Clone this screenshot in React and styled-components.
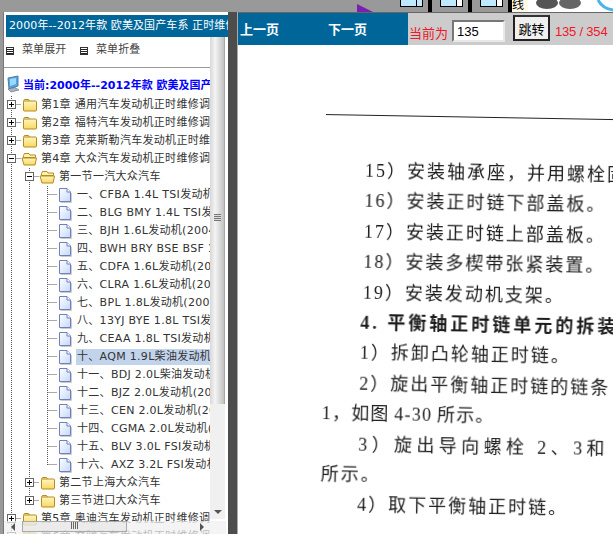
import styled, { createGlobalStyle } from "styled-components";

const GlobalStyle = createGlobalStyle`
  html, body {
    margin: 0;
    padding: 0;
    background: #999;
    overflow: hidden;
  }
  * { box-sizing: border-box; }
`;

const Shell = styled.div`
  width: 613px;
  height: 534px;
  display: flex;
  flex-direction: column;
  overflow: hidden;
  font-family: "DejaVu Sans", "Noto Sans CJK SC", sans-serif;
  font-size: 11px;
`;

/* strip of the page behind the frames */
const TopStrip = styled.div`
  height: 12px;
  flex: none;
  display: flex;
  background: #999;
  padding-left: 357px;
`;

const Triangle = styled.div`
  width: 16px;
  height: 8px;
  margin-top: 4px;
  margin-right: 23px;
  background: #7a1fb0;
  clip-path: polygon(0 0, 100% 100%, 0 100%);
`;

const Thumb = styled.div`
  width: 36px;
  height: 12px;
  padding: 0 5px 0 4px;
  background: #999;
  border-right: 4px solid #000;
  margin-right: 4px;
`;

const ThumbInner = styled.div`
  height: 7px;
  background: linear-gradient(90deg, #bfe8ff 0 72%, #000 72% 76%, ${(p) => (p.$pale ? "#fff" : "#bfe8ff")} 76%);
  border: 1px solid #000;
  border-top: 0;
`;

const StripLabel = styled.div`
  width: 16px;
  height: 12px;
  margin-left: -4px;
  background: #fffbe6;
  color: #000;
  font-size: 12px;
  line-height: 10px;
  overflow: hidden;
`;

const StripArt = styled.div`
  flex: 1;
  background: #fff;
`;

const Frames = styled.div`
  flex: 1;
  min-height: 0;
  display: flex;
`;

const LeftPanel = styled.div`
  width: 225px;
  margin-left: 3px;
  flex: none;
  display: flex;
  flex-direction: column;
  background: #fff;
  border-left: 1px solid #777;
  padding-top: 3px;
`;

const TitleBar = styled.div`
  height: 22px;
  flex: none;
  margin-left: 2px;
  padding-left: 3px;
  background: #00669a;
  color: #fff;
  line-height: 21px;
  letter-spacing: 0.1px;
  white-space: nowrap;
  overflow: hidden;
`;

const PanelBody = styled.div`
  flex: 1;
  min-height: 0;
  display: flex;
  position: relative;
`;

const TreeArea = styled.div`
  width: 206px;
  flex: none;
  overflow: hidden;
`;

const MenuBar = styled.div`
  height: 31px;
  display: flex;
  align-items: flex-start;
  padding: 5px 0 0 3px;
  color: #444;
  border-bottom: 1px solid #999;
  margin-left: -1px;
`;

const MenuItem = styled.div`
  width: 74px;
  display: flex;
  align-items: center;
  gap: 8px;
  line-height: 16px;
  letter-spacing: 0.1px;
`;

const MenuBox = styled.span`
  width: 8px;
  height: 8px;
  flex: none;
  margin-top: 2px;
  border: 1px solid #333;
  background: repeating-linear-gradient(#fff 0 1px, #222 1px 2px);
`;

const RootRow = styled.div`
  height: 18px;
  margin: 7px 0 3px;
  padding-left: 3px;
  display: flex;
  align-items: center;
  color: #00f;
  font-weight: bold;
  white-space: nowrap;
`;

const Row = styled.div`
  height: 18px;
  display: flex;
  align-items: center;
  white-space: nowrap;
  color: #333;
  margin-left: -1px;
`;

const Label = styled.span`
  margin-left: ${(p) => (p.$selected ? "1px" : "2px")};
  padding: 0 ${(p) => (p.$selected ? "1px" : "0")};
  height: 16px;
  line-height: 16px;
  flex: 1;
  letter-spacing: 0.3px;
  background: ${(p) => (p.$selected ? "#c2d4ec" : "transparent")};
`;

const VScroll = styled.div`
  width: 15px;
  height: 482px;
  flex: none;
  position: relative;
  background: #f0f0f0;
`;

const VThumb = styled.div`
  height: 367px;
  background: linear-gradient(90deg, #d8d8d8, #f4f4f4 35%, #c4c4c4 90%, #999);
  display: flex;
  align-items: center;
  justify-content: center;
  padding-bottom: 6px;
`;

const Grip = styled.span`
  width: 7px;
  height: 7px;
  background: repeating-linear-gradient(#777 0 1px, #ddd 1px 2px);
`;

const DownArrow = styled.span`
  position: absolute;
  left: 4px;
  bottom: 5px;
  border: 4px solid transparent;
  border-top: 4px solid #555;
  border-bottom: 0;
`;

const HScroll = styled.div`
  position: absolute;
  left: 0;
  right: 2px;
  bottom: 0;
  height: 13px;
  background: rgba(240, 240, 240, 0.72);
`;

const HThumb = styled.div`
  position: absolute;
  left: 18px;
  top: 0;
  width: 105px;
  height: 11px;
  border: 1px solid #aaa;
  background: rgba(225, 225, 225, 0.45);
  display: flex;
  justify-content: center;
`;

const HGrip = styled.span`
  width: 7px;
  height: 7px;
  background: repeating-linear-gradient(90deg, #666 0 1px, transparent 1px 2px);
`;

const HArrow = styled.span`
  position: absolute;
  top: 2px;
  left: ${(p) => p.$left}px;
  border: 4px solid transparent;
  ${(p) => (p.$right ? "border-left: 4px solid #555; border-right: 0;" : "border-right: 4px solid #555; border-left: 0;")}
`;

const Divider = styled.div`
  width: 10px;
  flex: none;
  background: #4d4d4d;
  border-right: 1px solid #aaa;
`;

const RightPanel = styled.div`
  flex: 1;
  min-width: 0;
  display: flex;
  flex-direction: column;
  background: #fff;
`;

const PageBar = styled.div`
  height: 33px;
  flex: none;
  display: flex;
  border-top: 1px solid #666;
`;

const PagerLinks = styled.div`
  width: 170px;
  flex: none;
  display: flex;
  gap: 49px;
  padding: 8px 0 0 2px;
  background: #00669a;
  color: #fff;
  font-family: "Noto Sans CJK SC", sans-serif;
  font-size: 13px;
  font-weight: bold;
  line-height: 16px;
`;

const JumpBox = styled.div`
  flex: 1;
  display: flex;
  align-items: flex-start;
  background: #ccc;
  color: #f01828;
  font-family: "Liberation Sans", "Noto Sans CJK SC", sans-serif;
  font-size: 13px;
`;

const CurrentLabel = styled.span`
  margin: 12px 0 0 1px;
  line-height: 17px;
`;

const PageInput = styled.input`
  width: 53px;
  height: 22px;
  margin: 7px 0 0 4px;
  padding: 0 3px;
  border: 2px solid;
  border-color: #777 #e8e8e8 #e8e8e8 #777;
  background: #fff;
  color: #000;
  font-family: "Liberation Sans", sans-serif;
  font-size: 13px;
  outline: none;
`;

const JumpButton = styled.button`
  width: 37px;
  height: 26px;
  margin: 2px 0 0 8px;
  padding: 0;
  border: 2px solid #222;
  border-top-color: #333;
  background: #f0f0f0;
  color: #000;
  font-family: "Noto Sans CJK SC", sans-serif;
  font-size: 13px;
`;

const PageCount = styled.span`
  margin: 11px 0 0 5px;
  line-height: 16px;
  letter-spacing: -0.2px;
  white-space: nowrap;
`;

const Page = styled.div`
  flex: 1;
  min-height: 0;
  overflow: hidden;
  padding: 69px 0 0 85px;
`;

const Scan = styled.div`
  width: 340px;
  transform: rotate(1deg);
  transform-origin: 0 0;
  filter: blur(0.3px);
  color: #1c1c1c;
  font-family: "Liberation Serif", "Noto Sans CJK SC", serif;
  font-size: 18px;
  line-height: 30.4px;
`;

const Rule = styled.div`
  height: 1px;
  background: #222;
  margin: 0 0 40px 3px;
  width: 330px;
`;

const ScanLine = styled.div`
  padding-left: ${(p) => p.$indent}px;
  white-space: nowrap;
  font-weight: ${(p) => (p.$bold ? "bold" : "normal")};
  letter-spacing: ${(p) => p.$spacing}px;
`;

const dots = { stroke: "#555", strokeWidth: 1, strokeDasharray: "1 1" };

// dtree style connector cell, 18px square
const Cell = ({ kind }) => {
  const box = kind.includes("plus") || kind.includes("minus");
  const up = kind !== "empty";
  const full = kind === "line" || kind === "join" || kind === "plus" || kind === "minus";
  return (
    <svg width="18" height="18" viewBox="0 0 18 18" style={{ flex: "none" }}>
      {up && <line x1="8.5" y1="0" x2="8.5" y2={full ? 18 : 9} {...dots} />}
      {kind !== "line" && kind !== "empty" && <line x1="8.5" y1="8.5" x2="18" y2="8.5" {...dots} />}
      {box && (
        <>
          <rect x="4.5" y="4.5" width="8" height="8" fill="#fff" stroke="#666" />
          <line x1="6" y1="8.5" x2="11" y2="8.5" stroke="#000" />
          {kind.includes("plus") && <line x1="8.5" y1="6" x2="8.5" y2="11" stroke="#000" />}
        </>
      )}
    </svg>
  );
};

const FolderIcon = ({ open }) => (
  <svg width="18" height="18" viewBox="0 0 18 18" style={{ flex: "none" }}>
    <defs>
      <linearGradient id="folderFill" x1="0" y1="0" x2="0" y2="1">
        <stop offset="0" stopColor="#fff6c0" />
        <stop offset="1" stopColor="#f8d860" />
      </linearGradient>
    </defs>
    {open ? (
      <>
        <path d="M2.5 5.5 L3.5 3.5 H8 L9 5 H14.5 V7.5 H2.5 Z" fill="#fff2b0" stroke="#b58a20" />
        <path d="M1 8 H15.5 L14 15 H3 Z" fill="url(#folderFill)" stroke="#b58a20" strokeLinejoin="round" />
      </>
    ) : (
      <>
        <path d="M2.5 5 L3.5 3.5 H7.5 L8.5 5" fill="#fff2b0" stroke="#b58a20" />
        <rect x="2.5" y="5" width="13" height="10" rx="1" fill="url(#folderFill)" stroke="#b58a20" />
      </>
    )}
  </svg>
);

const PageIcon = () => (
  <svg width="18" height="18" viewBox="0 0 18 18" style={{ flex: "none" }}>
    <defs>
      <linearGradient id="pageFill" x1="0" y1="0" x2="1" y2="1">
        <stop offset="0" stopColor="#fff" />
        <stop offset="1" stopColor="#c4d8fa" />
      </linearGradient>
    </defs>
    <path d="M2.5 2.5 H10 L13.5 6 V15.5 H2.5 Z" fill="url(#pageFill)" stroke="#6f7fc0" />
    <path d="M10 2.5 V6 H13.5" fill="#fff" stroke="#6f7fc0" />
    <path d="M3.5 16.5 H14.5 V7" fill="none" stroke="#ccc" />
  </svg>
);

const ComputerIcon = () => (
  <svg width="16" height="18" viewBox="0 0 16 18" style={{ flex: "none" }}>
    <path d="M1 3 L11 1 V11 L2 14 Z" fill="#4aa8e8" stroke="#5a7a9a" />
    <path d="M3 4 L9 3 V9 L3 11 Z" fill="#9ad8ff" />
    <path d="M1 14 L8 12.5 L12 15 L4 17 Z" fill="#aab4c4" stroke="#667" strokeWidth="0.6" />
  </svg>
);

const chapters = [
  ["第1章 通用汽车发动机正时维修调整"],
  ["第2章 福特汽车发动机正时维修调整"],
  ["第3章 克莱斯勒汽车发动机正时维修调整"],
];

const models = [
  "一、CFBA 1.4L TSI发动机(2008",
  "二、BLG BMY 1.4L TSI发动机",
  "三、BJH 1.6L发动机(2004",
  "四、BWH BRY BSE BSF 1.6L",
  "五、CDFA 1.6L发动机(2008",
  "六、CLRA 1.6L发动机(2008",
  "七、BPL 1.8L发动机(2004",
  "八、13YJ BYE 1.8L TSI发动机",
  "九、CEAA 1.8L TSI发动机(2008",
  "十、AQM 1.9L柴油发动机(2000",
  "十一、BDJ 2.0L柴油发动机",
  "十二、BJZ 2.0L发动机(2004",
  "十三、CEN 2.0L发动机(2008",
  "十四、CGMA 2.0L发动机(2008",
  "十五、BLV 3.0L FSI发动机",
  "十六、AXZ 3.2L FSI发动机",
];

const scanLines = [
  { indent: 43, spacing: 2, text: "15）安装轴承座，并用螺栓固定" },
  { indent: 43, spacing: 2, text: "16）安装正时链下部盖板。" },
  { indent: 43, spacing: 2, text: "17）安装正时链上部盖板。" },
  { indent: 43, spacing: 2, text: "18）安装多楔带张紧装置。" },
  { indent: 43, spacing: 2, text: "19）安装发动机支架。" },
  { indent: 41, spacing: 3, text: "4. 平衡轴正时链单元的拆装", bold: true },
  { indent: 41, spacing: 2, text: "1）拆卸凸轮轴正时链。" },
  { indent: 41, spacing: 2, text: "2）旋出平衡轴正时链的链条" },
  { indent: 4, spacing: 1.2, text: "1，如图\u20094-30\u2009所示。" },
  { indent: 41, spacing: 4.4, text: "3）旋出导向螺栓 2、3和 4" },
  { indent: 4, spacing: 2, text: "所示。" },
  { indent: 41, spacing: 2, text: "4）取下平衡轴正时链。" },
];

const App = () => (
  <Shell>
    <GlobalStyle />
    <TopStrip>
      <Triangle />
      <Thumb>
        <ThumbInner />
      </Thumb>
      <Thumb>
        <ThumbInner $pale />
      </Thumb>
      <Thumb>
        <ThumbInner $pale />
      </Thumb>
      <StripLabel>线</StripLabel>
      <StripArt>
        <svg width="85" height="12" viewBox="0 0 85 12">
          <ellipse cx="19" cy="3" rx="11" ry="6" fill="#555" />
          <ellipse cx="42" cy="3" rx="11" ry="6" fill="#666" />
          <path d="M70 0 Q75 9 85 10" fill="none" stroke="#4ab4e8" strokeWidth="3" />
        </svg>
      </StripArt>
    </TopStrip>
    <Frames>
      <LeftPanel>
        <TitleBar>2000年--2012年款 欧美及国产车系 正时维修</TitleBar>
        <PanelBody>
          <TreeArea>
            <MenuBar>
              <MenuItem>
                <MenuBox />
                菜单展开
              </MenuItem>
              <MenuItem>
                <MenuBox />
                菜单折叠
              </MenuItem>
            </MenuBar>
            <RootRow>
              <ComputerIcon />
              当前:2000年--2012年款 欧美及国产车系
            </RootRow>
            {chapters.map(([name]) => (
              <Row key={name}>
                <Cell kind="plus" />
                <FolderIcon />
                <Label>{name}</Label>
              </Row>
            ))}
            <Row>
              <Cell kind="minus" />
              <FolderIcon open />
              <Label>第4章 大众汽车发动机正时维修调整</Label>
            </Row>
            <Row>
              <Cell kind="line" />
              <Cell kind="minus" />
              <FolderIcon open />
              <Label>第一节一汽大众汽车</Label>
            </Row>
            {models.map((name, i) => (
              <Row key={name}>
                <Cell kind="line" />
                <Cell kind="line" />
                <Cell kind={i === models.length - 1 ? "joinbottom" : "join"} />
                <PageIcon />
                <Label $selected={i === 9}>{name}</Label>
              </Row>
            ))}
            <Row>
              <Cell kind="line" />
              <Cell kind="plus" />
              <FolderIcon />
              <Label>第二节上海大众汽车</Label>
            </Row>
            <Row>
              <Cell kind="line" />
              <Cell kind="plusbottom" />
              <FolderIcon />
              <Label>第三节进口大众汽车</Label>
            </Row>
            <Row>
              <Cell kind="plus" />
              <FolderIcon />
              <Label>第5章 奥迪汽车发动机正时维修调整</Label>
            </Row>
            <Row>
              <Cell kind="plus" />
              <FolderIcon />
              <Label>第6章 奔驰汽车发动机正时维修调整</Label>
            </Row>
          </TreeArea>
          <VScroll>
            <VThumb>
              <Grip />
            </VThumb>
            <DownArrow />
          </VScroll>
          <HScroll>
            <HArrow $left={7} />
            <HThumb>
              <HGrip />
            </HThumb>
            <HArrow $left={196} $right />
          </HScroll>
        </PanelBody>
      </LeftPanel>
      <Divider />
      <RightPanel>
        <PageBar>
          <PagerLinks>
            <span>上一页</span>
            <span>下一页</span>
          </PagerLinks>
          <JumpBox>
            <CurrentLabel>当前为</CurrentLabel>
            <PageInput defaultValue="135" />
            <JumpButton>跳转</JumpButton>
            <PageCount>135 / 354</PageCount>
          </JumpBox>
        </PageBar>
        <Page>
          <Scan>
            <Rule />
            {scanLines.map((line) => (
              <ScanLine key={line.text} $indent={line.indent} $bold={line.bold} $spacing={line.spacing}>
                {line.text}
              </ScanLine>
            ))}
          </Scan>
        </Page>
      </RightPanel>
    </Frames>
  </Shell>
);

export default App;
